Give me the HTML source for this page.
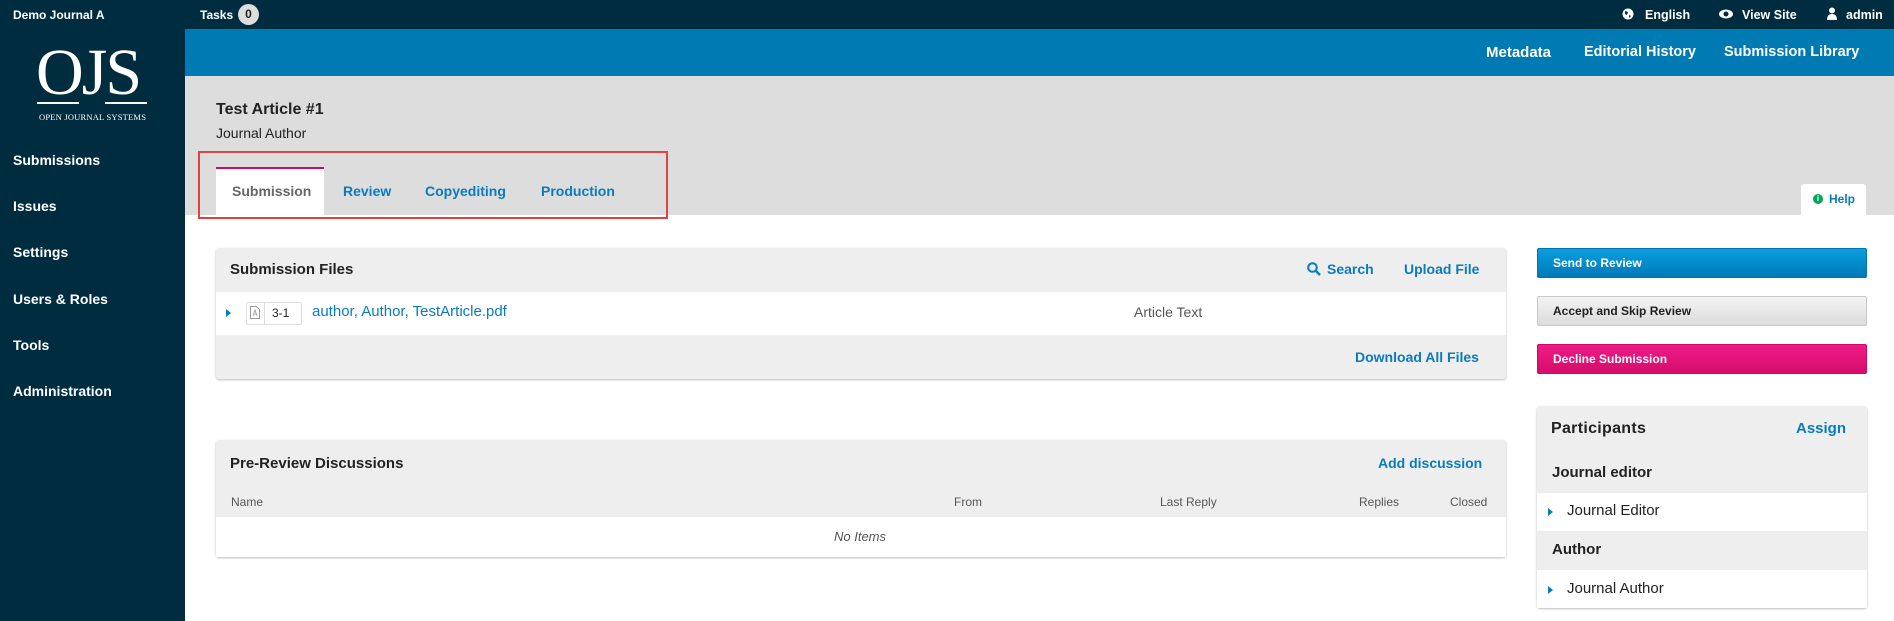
<!DOCTYPE html>
<html><head><meta charset="utf-8"><style>
*{margin:0;padding:0;box-sizing:border-box}
body{width:1894px;height:621px;overflow:hidden;background:#fff;font-family:"Liberation Sans",sans-serif;position:relative;color:#222}
.a{position:absolute;white-space:nowrap}
.b{font-weight:bold}
.w{color:#fff}
.l{color:#0a7bbd}
.g{color:#555}
</style></head><body>
<div class="a" style="left:0;top:0;width:1894px;height:29px;background:#002c40"></div>
<div class="a b w" style="left:13px;top:8px;font-size:12px">Demo Journal A</div>
<div class="a b w" style="left:200px;top:8px;font-size:12px">Tasks</div>
<div class="a b" style="left:238px;top:4px;width:21px;height:21px;border-radius:50%;background:#ddd;color:#222;font-size:12px;text-align:center;line-height:21px">0</div>
<svg class="a" style="left:1622px;top:8px" width="12" height="12" viewBox="0 0 12 12"><circle cx="6" cy="6" r="5.5" fill="#fff"/><path d="M3 3 L6 4 L5 7 L3 6Z M7 7 L9 8 L7 10Z" fill="#002c40"/></svg>
<div class="a b w" style="left:1645px;top:8px;font-size:12.5px">English</div>
<svg class="a" style="left:1719px;top:9px" width="14" height="10" viewBox="0 0 14 10"><ellipse cx="7" cy="5" rx="7" ry="4.5" fill="#fff"/><circle cx="7" cy="5" r="2.5" fill="#002c40"/></svg>
<div class="a b w" style="left:1742px;top:8px;font-size:12.5px">View Site</div>
<svg class="a" style="left:1827px;top:7px" width="10" height="13" viewBox="0 0 10 13"><circle cx="5" cy="3.5" r="3" fill="#fff"/><path d="M0 13 Q0 7 5 7 Q10 7 10 13Z" fill="#fff"/></svg>
<div class="a b w" style="left:1846px;top:8px;font-size:12.5px">admin</div>
<div class="a" style="left:0;top:29px;width:185px;height:592px;background:#002c40"></div>
<div class="a w" style="left:36px;top:40px;font-family:'Liberation Serif',serif;font-size:66px;line-height:66px;letter-spacing:-2px">OJS</div>
<div class="a" style="left:37px;top:102px;width:42px;height:2px;background:#fff"></div>
<div class="a" style="left:105px;top:102px;width:42px;height:2px;background:#fff"></div>
<div class="a w" style="left:39px;top:112px;font-family:'Liberation Serif',serif;font-size:8.5px;letter-spacing:0.2px">OPEN JOURNAL SYSTEMS</div>
<div class="a b w" style="left:13px;top:152px;font-size:14px">Submissions</div>
<div class="a b w" style="left:13px;top:198px;font-size:14px">Issues</div>
<div class="a b w" style="left:13px;top:244px;font-size:14px">Settings</div>
<div class="a b w" style="left:13px;top:291px;font-size:14px">Users &amp; Roles</div>
<div class="a b w" style="left:13px;top:337px;font-size:14px">Tools</div>
<div class="a b w" style="left:13px;top:383px;font-size:14px">Administration</div>
<div class="a" style="left:185px;top:29px;width:1709px;height:47px;background:#007ab2"></div>
<div class="a b w" style="left:1486px;top:44px;font-size:15px">Metadata</div>
<div class="a b w" style="left:1584px;top:44px;font-size:14.5px">Editorial History</div>
<div class="a b w" style="left:1724px;top:44px;font-size:14.5px">Submission Library</div>
<div class="a" style="left:185px;top:76px;width:1709px;height:139px;background:#ddd"></div>
<div class="a b" style="left:216px;top:101px;font-size:16px">Test Article #1</div>
<div class="a" style="left:216px;top:125px;font-size:14px">Journal Author</div>
<div class="a" style="left:216px;top:167px;width:108px;height:48px;background:#fff;border-top:2px solid #d00a6c"></div>
<div class="a b" style="left:232px;top:183px;font-size:14px;color:#666">Submission</div>
<div class="a b l" style="left:343px;top:183px;font-size:14px">Review</div>
<div class="a b l" style="left:425px;top:183px;font-size:14px">Copyediting</div>
<div class="a b l" style="left:541px;top:183px;font-size:14px">Production</div>
<div class="a" style="left:198px;top:151px;width:470px;height:68px;border:2px solid #e0433f"></div>
<div class="a" style="left:1801px;top:184px;width:65px;height:31px;background:#fff;border-radius:3px 3px 0 0"></div>
<div class="a" style="left:1813px;top:194px;width:10px;height:10px;border-radius:50%;background:#00a65a;color:#fff;font-size:8px;font-weight:bold;text-align:center;line-height:10px">i</div>
<div class="a b l" style="left:1829px;top:192px;font-size:12px">Help</div>
<div class="a" style="left:216px;top:248px;width:1290px;height:131px;background:#eee;box-shadow:0 1px 2px #bbb;border-radius:3px"></div>
<div class="a" style="left:216px;top:292px;width:1290px;height:43px;background:#fff"></div>
<div class="a b" style="left:230px;top:261px;font-size:15px">Submission Files</div>
<svg class="a" style="left:1307px;top:262px" width="14" height="14" viewBox="0 0 14 14"><circle cx="5.5" cy="5.5" r="4.3" fill="none" stroke="#0a7bbd" stroke-width="2"/><path d="M8.5 8.5 L13 13" stroke="#0a7bbd" stroke-width="2.4"/></svg>
<div class="a b l" style="left:1327px;top:261px;font-size:14px">Search</div>
<div class="a b l" style="left:1404px;top:261px;font-size:14px">Upload File</div>
<svg class="a" style="left:226px;top:309px" width="6" height="8"><path d="M0 0 L5 4 L0 8Z" fill="#0a7bbd"/></svg>
<div class="a" style="left:246px;top:302px;width:56px;height:23px;border:1px solid #ddd;border-radius:2px"></div>
<div class="a" style="left:264px;top:302px;width:1px;height:23px;background:#ddd"></div>
<svg class="a" style="left:250px;top:306px" width="10" height="13" viewBox="0 0 10 13"><path d="M0.5 0.5 H6.5 L9.5 3.5 V12.5 H0.5Z" fill="none" stroke="#999"/><path d="M3 10 L5 4 L7 10 M4 8 H6" fill="none" stroke="#999" stroke-width="0.8"/></svg>
<div class="a" style="left:272px;top:306px;font-size:12px">3-1</div>
<div class="a l" style="left:312px;top:303px;font-size:15px">author, Author, TestArticle.pdf</div>
<div class="a g" style="left:1134px;top:304px;font-size:14px">Article Text</div>
<div class="a b l" style="left:1355px;top:349px;font-size:14px">Download All Files</div>
<div class="a" style="left:216px;top:440px;width:1290px;height:117px;background:#eee;box-shadow:0 1px 2px #bbb;border-radius:3px"></div>
<div class="a" style="left:216px;top:517px;width:1290px;height:40px;background:#fff"></div>
<div class="a b" style="left:230px;top:455px;font-size:15px">Pre-Review Discussions</div>
<div class="a b l" style="left:1378px;top:455px;font-size:14px">Add discussion</div>
<div class="a g" style="left:231px;top:495px;font-size:12px">Name</div>
<div class="a g" style="left:954px;top:495px;font-size:12px">From</div>
<div class="a g" style="left:1160px;top:495px;font-size:12px">Last Reply</div>
<div class="a g" style="left:1359px;top:495px;font-size:12px">Replies</div>
<div class="a g" style="left:1450px;top:495px;font-size:12px">Closed</div>
<div class="a g" style="left:834px;top:529px;font-size:13px;font-style:italic">No Items</div>
<div class="a" style="left:1537px;top:248px;width:330px;height:30px;background:linear-gradient(#0a9ee0,#0079b6);border:1px solid #0075ad;border-radius:2px"></div>
<div class="a b w" style="left:1553px;top:256px;font-size:12px">Send to Review</div>
<div class="a" style="left:1537px;top:296px;width:330px;height:30px;background:linear-gradient(#f3f3f3,#dcdcdc);border:1px solid #c8c8c8;border-radius:2px"></div>
<div class="a b" style="left:1553px;top:304px;font-size:12px;color:#222">Accept and Skip Review</div>
<div class="a" style="left:1537px;top:344px;width:330px;height:30px;background:linear-gradient(#ef1a86,#d50d6b);border:1px solid #c90c66;border-radius:2px"></div>
<div class="a b w" style="left:1553px;top:352px;font-size:12px">Decline Submission</div>
<div class="a" style="left:1537px;top:406px;width:330px;height:202px;background:#eee;box-shadow:0 1px 2px #bbb;border-radius:3px"></div>
<div class="a" style="left:1537px;top:493px;width:330px;height:38px;background:#fff"></div>
<div class="a" style="left:1537px;top:570px;width:330px;height:38px;background:#fff"></div>
<div class="a b" style="left:1551px;top:420px;font-size:16px;letter-spacing:0.3px">Participants</div>
<div class="a b l" style="left:1796px;top:420px;font-size:15px">Assign</div>
<div class="a b" style="left:1552px;top:464px;font-size:15px">Journal editor</div>
<svg class="a" style="left:1548px;top:508px" width="6" height="8"><path d="M0 0 L5 4 L0 8Z" fill="#0a7bbd"/></svg>
<div class="a" style="left:1567px;top:502px;font-size:15px">Journal Editor</div>
<div class="a b" style="left:1552px;top:541px;font-size:15px">Author</div>
<svg class="a" style="left:1548px;top:586px" width="6" height="8"><path d="M0 0 L5 4 L0 8Z" fill="#0a7bbd"/></svg>
<div class="a" style="left:1567px;top:580px;font-size:15px">Journal Author</div>
</body></html>
